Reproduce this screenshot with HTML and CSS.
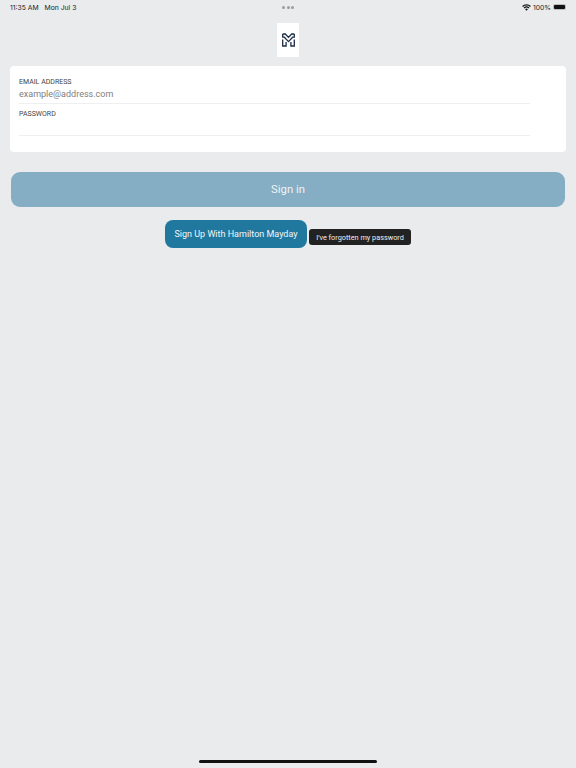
FILE: index.html
```html
<!DOCTYPE html>
<html lang="en">
<head>
    <meta charset="UTF-8">
    <meta name="viewport" content="width=device-width, initial-scale=1.0">
    <title>Sign in</title>
    <link rel="stylesheet" href="styles.css">
</head>
<body>
    <div class="status-bar">
        <div class="status-time">
            <span>11:35 AM</span>
            <span>Mon Jul 3</span>
        </div>
        <div class="status-dots"><i></i><i></i><i></i></div>
        <div class="status-right">
            <svg class="wifi" width="9" height="7" viewBox="0 0 10 8">
                <path d="M5 7.6 3.4 5.9a2.3 2.3 0 0 1 3.2 0z" fill="#111"/>
                <path d="M2.7 5.2 1.7 4.1a4.7 4.7 0 0 1 6.6 0l-1 1.1a3.3 3.3 0 0 0-4.6 0z" fill="#111"/>
                <path d="M1 3.4 0 2.4a7 7 0 0 1 10 0l-1 1a5.6 5.6 0 0 0-8 0z" fill="#111"/>
            </svg>
            <span>100%</span>
            <div class="battery"><div class="battery-fill"></div></div>
        </div>
    </div>

    <div class="logo-box">
        <svg width="13" height="14" viewBox="0 0 13 14" fill="none" stroke="#1f2d45" stroke-width="1.3">
            <path d="M0.7 1h2.6L6.5 4.4 9.7 1h2.6"/>
            <path d="M0.7 1v3.2h1.6L6.5 8.6l4.2-4.4h1.6V1"/>
            <path d="M0.7 6.4V13h3.4V9M12.3 6.4V13H8.9V9"/>
        </svg>
    </div>

    <form class="login-card">
        <label class="field">
            <span class="field-label">EMAIL ADDRESS</span>
            <span class="field-placeholder">example@address.com</span>
        </label>
        <label class="field field-password">
            <span class="field-label">PASSWORD</span>
            <span class="field-placeholder"></span>
        </label>
    </form>

    <div class="signin-btn">Sign in</div>

    <div class="extra-actions">
        <div class="signup-btn">Sign Up With Hamilton Mayday</div>
        <div class="forgot-btn">I've forgotten my password</div>
    </div>

    <div class="home-bar"></div>
</body>
</html>
```

FILE: styles.css
```css
* {
    box-sizing: border-box;
}
html, body {
    height: 100%;
}
body {
    margin: 0;
    display: flex;
    flex-direction: column;
    background-color: #e9ebec;
    font-family: Roboto, "Liberation Sans", sans-serif;
    color: #222;
}
.status-bar {
    height: 14px;
    padding: 0 10px 0 10px;
    display: grid;
    grid-template-columns: 1fr auto 1fr;
    align-items: center;
    font-family: Inter, "Liberation Sans", sans-serif;
    font-size: 6.8px;
    color: #222;
}
.status-time {
    display: flex;
    gap: 6px;
}
.status-dots {
    display: flex;
    gap: 1.5px;
}
.status-dots i {
    width: 3px;
    height: 3px;
    border-radius: 50%;
    background-color: #9a9ca0;
}
.status-right {
    display: flex;
    justify-content: flex-end;
    align-items: center;
    gap: 2px;
}
.battery {
    width: 13px;
    height: 6px;
    padding: 1px;
    border-radius: 2px;
    background-color: #bbb;
}
.battery-fill {
    height: 100%;
    border-radius: 1px;
    background-color: #111;
}
.logo-box {
    width: 22px;
    height: 34px;
    margin: 9px auto 0;
    display: flex;
    align-items: center;
    justify-content: center;
    background-color: #fff;
}
.login-card {
    height: 86px;
    margin: 9px 10px 0;
    padding: 11px 36px 0 9px;
    background-color: #fff;
    border-radius: 4px;
}
.field {
    display: block;
    height: 27px;
    border-bottom: 1px solid #eeeff0;
}
.field-password {
    margin-top: 5px;
}
.field-label {
    display: block;
    height: 10px;
    font-size: 7px;
    line-height: 10px;
    color: #444;
}
.field-placeholder {
    display: block;
    font-size: 9px;
    line-height: 14px;
    margin-top: 0;
    color: #808080;
}
.signin-btn {
    height: 35px;
    margin: 20px 11px 0;
    padding-bottom: 1px;
    display: flex;
    align-items: center;
    justify-content: center;
    background-color: #85adc3;
    border-radius: 9px;
    color: #eef3f6;
    font-size: 11.3px;
}
.extra-actions {
    margin: 13px 0 0 165px;
    display: flex;
    align-items: flex-start;
    gap: 2px;
}
.signup-btn {
    width: 142px;
    height: 28px;
    padding-bottom: 1px;
    display: flex;
    align-items: center;
    justify-content: center;
    background-color: #21789f;
    border-radius: 8px;
    color: #f2f6f8;
    font-size: 9px;
}
.forgot-btn {
    width: 102px;
    height: 16px;
    margin-top: 9px;
    display: flex;
    align-items: center;
    justify-content: center;
    background-color: #222;
    border-radius: 3px;
    color: #eee;
    font-size: 7.3px;
}
.home-bar {
    width: 178px;
    height: 3px;
    margin: auto auto 5px;
    background-color: #111;
    border-radius: 2px;
}
```
